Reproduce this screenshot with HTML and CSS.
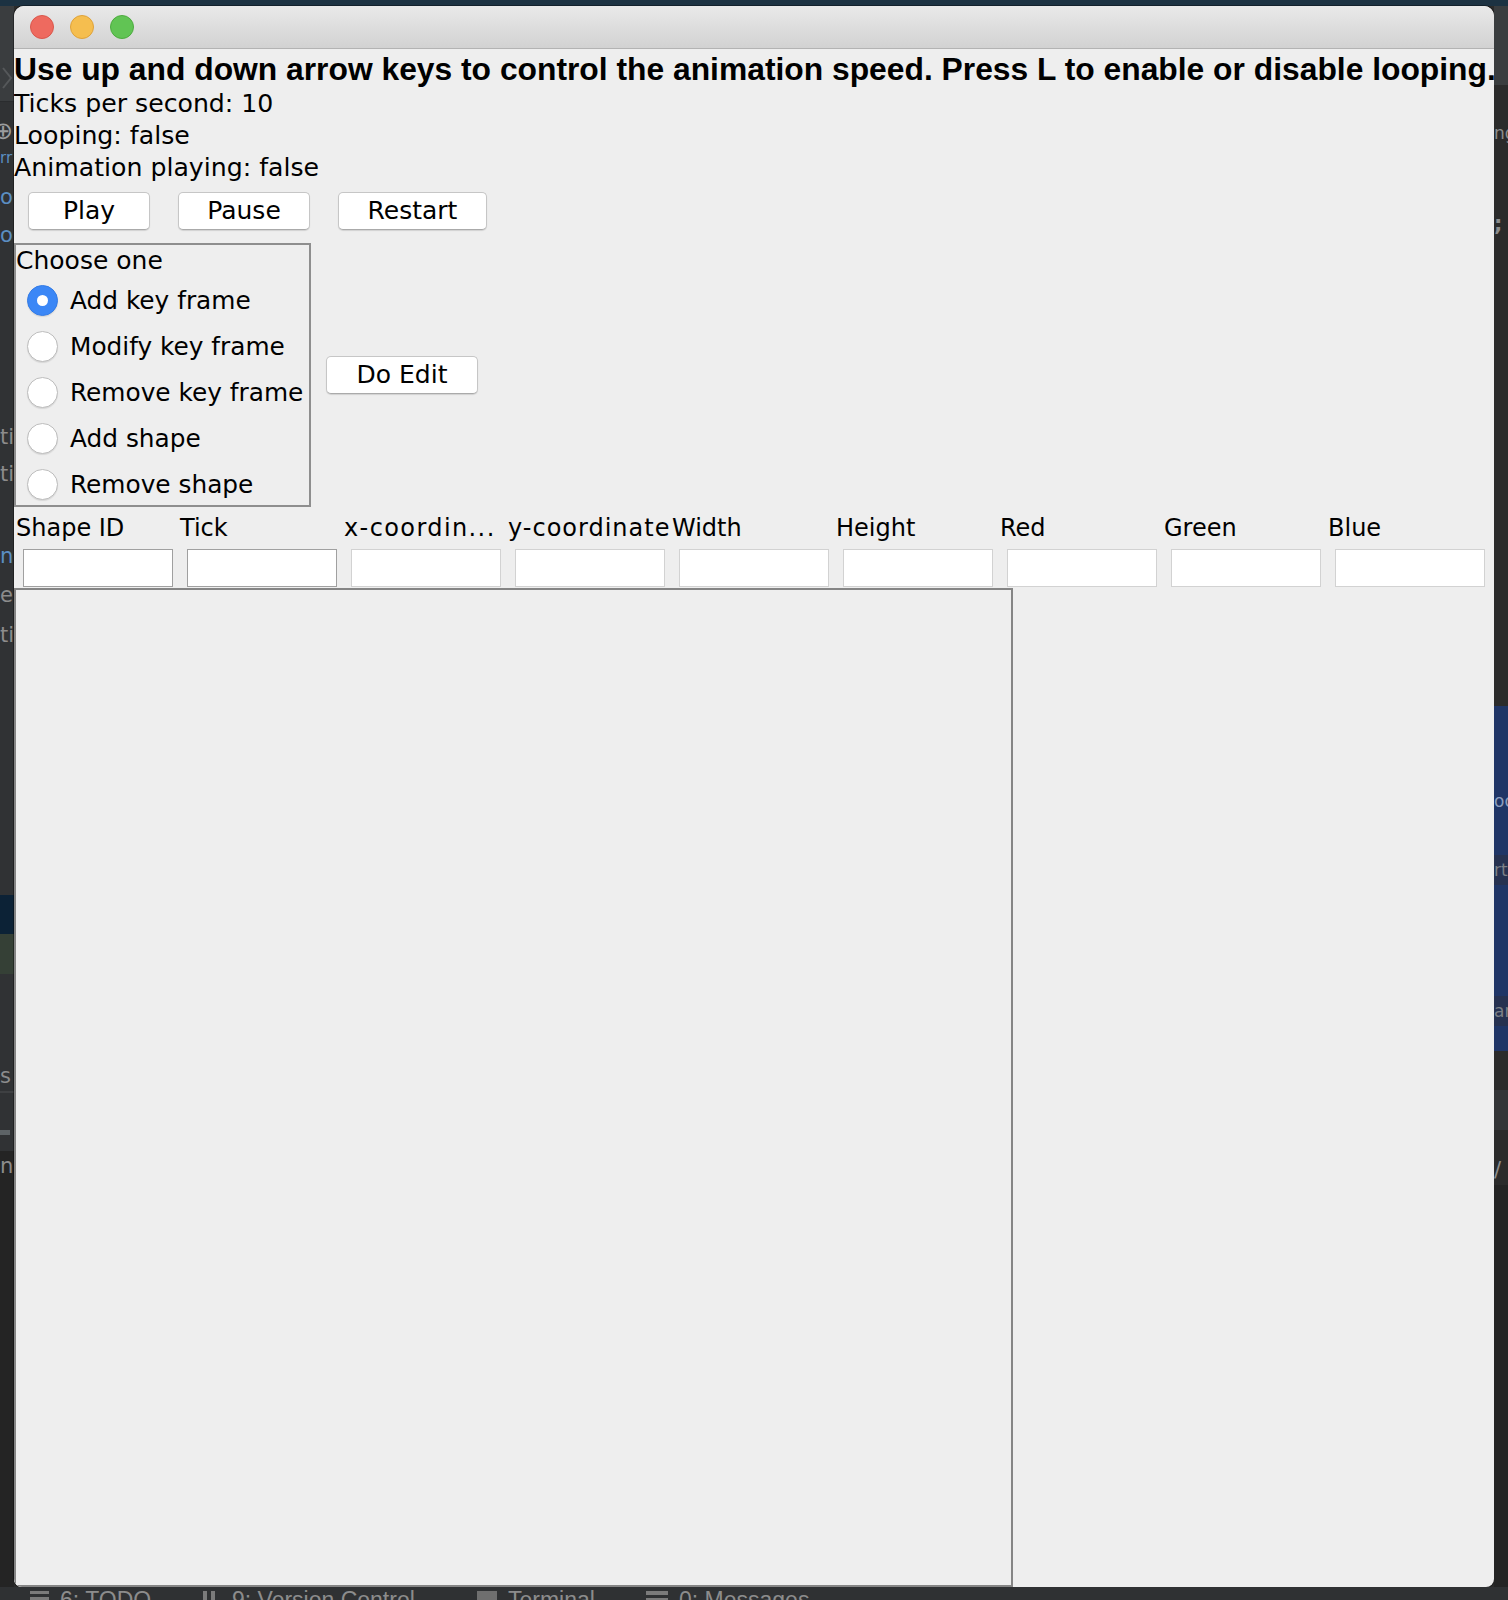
FILE: index.html
```html
<!DOCTYPE html>
<html lang="en">
<head>
<meta charset="utf-8">
<title>Animation Editor</title>
<link rel="stylesheet" href="styles.css">
</head>
<body>
<div class="desktop">
  <div class="ide-top"></div>
  <div class="ide-top"></div>
  <div class="ide-top"></div>

  <div class="ide-left">
    <div class="l-hdr">
      <svg class="chev" width="14" height="24" viewBox="0 0 14 24"><polyline points="3,2 11,12 3,22" fill="none" stroke="#55585a" stroke-width="2"/></svg>
    </div>
    <div class="gap g15"></div>
    <div class="frag plus h28">&#x2295;</div>
    <div class="gap g6"></div>
    <div class="frag blue small">rr</div>
    <div class="gap g7"></div>
    <div class="frag blue">o</div>
    <div class="gap g8"></div>
    <div class="frag blue">o</div>
    <div class="gap g172"></div>
    <div class="frag grey">tio</div>
    <div class="gap g7"></div>
    <div class="frag grey">tio</div>
    <div class="gap g52"></div>
    <div class="frag blue">n</div>
    <div class="gap g9"></div>
    <div class="frag grey">e</div>
    <div class="gap g10"></div>
    <div class="frag grey">ti</div>
    <div class="gap g245"></div>
    <div class="band navy"></div>
    <div class="band olive"></div>
    <div class="gap g87"></div>
    <div class="frag grey">s</div>
    <div class="sep"></div>
    <div class="gap g37"></div>
    <div class="bar"></div>
    <div class="gap g16"></div>
    <div class="frag grey darkbg">n:</div>
    <div class="rest"></div>
  </div>

  <div class="window">
    <div class="titlebar">
      <span class="light red"></span>
      <span class="light yellow"></span>
      <span class="light green"></span>
    </div>
    <div class="content">
      <div class="heading">Use up and down arrow keys to control the animation speed. Press L to enable or disable looping.</div>
      <div class="info">Ticks per second: 10</div>
      <div class="info">Looping: false</div>
      <div class="info">Animation playing: false</div>

      <div class="controls">
        <button class="btn btn-play">Play</button>
        <button class="btn btn-pause">Pause</button>
        <button class="btn btn-restart">Restart</button>
      </div>

      <div class="edit-row">
        <div class="choose">
          <div class="choose-title">Choose one</div>
          <label class="radio-row"><span class="radio checked"></span><span class="radio-label">Add key frame</span></label>
          <label class="radio-row"><span class="radio"></span><span class="radio-label">Modify key frame</span></label>
          <label class="radio-row"><span class="radio"></span><span class="radio-label">Remove key frame</span></label>
          <label class="radio-row"><span class="radio"></span><span class="radio-label">Add shape</span></label>
          <label class="radio-row"><span class="radio"></span><span class="radio-label">Remove shape</span></label>
        </div>
        <button class="btn btn-edit">Do Edit</button>
      </div>

      <div class="fields">
        <div class="cell"><div class="field-label">Shape ID</div><div class="field dark"></div></div>
        <div class="cell"><div class="field-label">Tick</div><div class="field dark"></div></div>
        <div class="cell"><div class="field-label wide-x">x-coordin...</div><div class="field"></div></div>
        <div class="cell"><div class="field-label wide-y">y-coordinate</div><div class="field"></div></div>
        <div class="cell"><div class="field-label">Width</div><div class="field"></div></div>
        <div class="cell"><div class="field-label">Height</div><div class="field"></div></div>
        <div class="cell"><div class="field-label">Red</div><div class="field"></div></div>
        <div class="cell"><div class="field-label">Green</div><div class="field"></div></div>
        <div class="cell"><div class="field-label">Blue</div><div class="field"></div></div>
      </div>

      <div class="canvas"></div>
    </div>
  </div>

  <div class="ide-right">
    <div class="r-hdr"><span class="dash"></span></div>
    <div class="gap g33"></div>
    <div class="frag grey rt">ng</div>
    <div class="gap g61"></div>
    <div class="frag grey semi">;</div>
    <div class="gap g467"></div>
    <div class="rband">
      <div class="gap g80"></div>
      <div class="frag light-t rt">oc</div>
      <div class="gap g39"></div>
      <div class="frag dim-t rt">rt</div>
      <div class="gap g111"></div>
      <div class="frag dim-t rt">ar</div>
    </div>
    <div class="gap g39"></div>
    <div class="rsep"></div>
    <div class="gap g25"></div>
    <div class="frag grey">/</div>
    <div class="rest"></div>
  </div>

  <div class="ide-status"></div>
  <div class="ide-status">
    <span class="st-item st-todo"><span class="st-icon list"></span>6: TODO</span>
    <span class="st-item st-vcs"><span class="st-icon vcs"></span>9: Version Control</span>
    <span class="st-item st-term"><span class="st-icon term"></span>Terminal</span>
    <span class="st-item st-msg"><span class="st-icon msg"></span>0: Messages</span>
  </div>
  <div class="ide-status"></div>
</div>
</body>
</html>
```

FILE: styles.css
```css
* { box-sizing: border-box; }

html, body {
  margin: 0;
  padding: 0;
  background: #2b2b2b;
}

.desktop {
  width: 1508px;
  height: 1600px;
  overflow: hidden;
  display: grid;
  grid-template-columns: 14px 1480px 14px;
  grid-template-rows: 6px 1581px 13px;
  background: #2b2b2b;
  font-family: "DejaVu Sans", sans-serif;
}

/* ---------- IDE behind the window ---------- */
.ide-top { background: #1c3242; }

.ide-left, .ide-right {
  display: flex;
  flex-direction: column;
  overflow: hidden;
}
.ide-left { background: #303234; }
.ide-right { background: #2b2b2b; }

.l-hdr {
  flex: none;
  height: 96px;
  background: #3a3d3f;
  border-bottom: 1px solid #2a2c2e;
  padding-top: 60px;
}
.chev { display: block; }

.r-hdr {
  flex: none;
  height: 79px;
  background: #3a3d3f;
  padding-top: 68px;
}
.dash {
  display: block;
  width: 7px;
  height: 3px;
  margin-left: 16px;
  background: #e0e0e0;
}

.frag {
  flex: none;
  width: 100%;
  height: 30px;
  font-family: "DejaVu Sans", sans-serif;
  font-size: 21px;
  line-height: 30px;
  white-space: nowrap;
  overflow: hidden;
}
.frag.rt { font-size: 17px; }
.frag.h28 { height: 28px; line-height: 28px; }
.frag.plus { color: #9a9c9e; font-size: 24px; text-indent: -7px; }
.frag.blue { color: #5b8ec2; }
.frag.small { height: 24px; font-size: 15px; line-height: 14px; }
.frag.grey { color: #8c8c8c; }
.frag.darkbg { background: #242424; }
.frag.semi { font-weight: bold; }
.frag.light-t { color: #8c9dbd; }
.frag.dim-t { color: #7b7f86; background: #263150; }

.gap { flex: none; width: 100%; }
.g6 { height: 6px; }
.g7 { height: 7px; }
.g8 { height: 8px; }
.g9 { height: 9px; }
.g10 { height: 10px; }
.g15 { height: 15px; }
.g16 { height: 16px; }
.g25 { height: 25px; }
.g33 { height: 33px; }
.g37 { height: 37px; }
.g39 { height: 39px; }
.g52 { height: 52px; }
.g61 { height: 61px; }
.g80 { height: 80px; }
.g87 { height: 87px; }
.g111 { height: 111px; }
.g172 { height: 172px; }
.g245 { height: 245px; }
.g467 { height: 467px; }

.band { flex: none; width: 100%; }
.band.navy { height: 39px; background: #0c2236; }
.band.olive { height: 40px; background: #354036; }
.sep { flex: none; width: 100%; height: 2px; background: #3e4042; }
.bar { flex: none; width: 10px; height: 5px; background: #5d6366; }
.rest { flex: 1; width: 100%; background: #242424; }

.rband {
  flex: none;
  width: 100%;
  height: 345px;
  background: #1f3566;
  display: flex;
  flex-direction: column;
}
.rsep { flex: none; width: 100%; height: 40px; background: #333537; }

.ide-status {
  background: #2f3133;
  overflow: hidden;
  display: flex;
  align-items: flex-start;
  padding-left: 16px;
  font-family: "Liberation Sans", sans-serif;
  font-size: 23px;
  line-height: 22px;
  color: #8c8c8c;
  white-space: nowrap;
}
.ide-status:first-child { padding-left: 0; }
.st-item {
  flex: none;
  display: flex;
  align-items: flex-start;
  gap: 11px;
  padding-top: 2px;
}
.st-todo { width: 173px; }
.st-vcs { width: 274px; }
.st-term { width: 169px; }
.st-icon { display: block; width: 20px; height: 14px; margin-top: 2px; background: #7b7b7b; }
.st-icon.list { width: 19px; background: repeating-linear-gradient(#7b7b7b 0 3px, transparent 3px 6px); }
.st-icon.vcs { width: 18px; background: linear-gradient(90deg, #7b7b7b 0 4px, transparent 4px 8px, #7b7b7b 8px 12px, transparent 12px); }
.st-icon.term { width: 20px; background: #6f6f6f; }
.st-icon.msg { width: 22px; background: linear-gradient(#7b7b7b 0 4px, transparent 4px 7px, #7b7b7b 7px 10px, transparent 10px); }

/* ---------- Window ---------- */
.window {
  grid-column: 2;
  grid-row: 2;
  display: flex;
  flex-direction: column;
  background: #eeeeee;
  border-radius: 10px 10px 8px 8px;
  overflow: hidden;
  box-shadow: 0 0 0 1px rgba(0,0,0,0.35);
}

.titlebar {
  flex: none;
  height: 43px;
  background: linear-gradient(#e9e9e9, #d2d2d2);
  border-bottom: 1px solid #b3b3b3;
  display: flex;
  align-items: center;
  gap: 16px;
  padding-left: 16px;
}
.light {
  width: 24px;
  height: 24px;
  border-radius: 50%;
  display: block;
}
.light.red { background: #ee6a5f; border: 1px solid #d9574c; }
.light.yellow { background: #f5be4f; border: 1px solid #dea23a; }
.light.green { background: #61c454; border: 1px solid #4dab3f; }

.content {
  flex: 1;
  display: flex;
  flex-direction: column;
  color: #000;
}

.heading {
  font-family: "Liberation Sans", Arial, sans-serif;
  font-weight: bold;
  font-size: 31.8px;
  line-height: 36px;
  padding-top: 2px;
  height: 39px;
  white-space: nowrap;
}

.info {
  font-size: 25.2px;
  line-height: 32px;
  height: 32px;
  white-space: nowrap;
}

.controls {
  display: flex;
  gap: 28px;
  padding-left: 14px;
  margin-top: 8px;
  height: 38px;
}

.btn {
  font-family: "DejaVu Sans", sans-serif;
  font-size: 25px;
  color: #000;
  background: #ffffff;
  border: 1px solid #c6c6c6;
  border-bottom-color: #aaaaaa;
  border-radius: 5px;
  box-shadow: 0 1px 1px rgba(0,0,0,0.12);
  height: 38px;
  line-height: 35px;
  padding: 0 0 1px;
  text-align: center;
  margin: 0;
}
.btn-play { width: 122px; }
.btn-pause { width: 132px; }
.btn-restart { width: 149px; }
.btn-edit { width: 152px; }

.edit-row {
  display: flex;
  align-items: center;
  gap: 15px;
  margin-top: 13px;
}

.choose {
  width: 297px;
  height: 264px;
  border: 2px solid #8e8e8e;
  display: flex;
  flex-direction: column;
}
.choose-title {
  flex: none;
  height: 32px;
  line-height: 32px;
  font-size: 25px;
  white-space: nowrap;
}
.radio-row {
  flex: none;
  height: 46px;
  display: flex;
  align-items: center;
  padding-left: 11px;
  gap: 12px;
}
.radio {
  flex: none;
  width: 31px;
  height: 31px;
  border-radius: 50%;
  background: #ffffff;
  border: 1px solid #bdbdbd;
  box-shadow: 0 1px 1px rgba(0,0,0,0.10);
  display: flex;
  align-items: center;
  justify-content: center;
}
.radio.checked {
  background: #3b87f6;
  border-color: #347ce6;
}
.radio.checked::after {
  content: "";
  width: 11px;
  height: 11px;
  border-radius: 50%;
  background: #ffffff;
}
.radio-label {
  font-size: 24.8px;
  white-space: nowrap;
}

.fields {
  display: grid;
  grid-template-columns: repeat(9, 164px);
}
.cell {
  display: flex;
  flex-direction: column;
  min-width: 0;
}
.field-label {
  font-size: 24px;
  line-height: 42px;
  height: 42px;
  padding-left: 2px;
  white-space: nowrap;
}
.field-label.wide-x { letter-spacing: 1.4px; }
.field-label.wide-y { letter-spacing: 1px; }
.field {
  margin-left: 9px;
  width: 150px;
  height: 38px;
  background: #ffffff;
  border: 1px solid #d2d2d2;
}
.field.dark { border-color: #a0a0a0; }

.canvas {
  margin-top: 1px;
  width: 999px;
  height: 999px;
  border: 2px solid #858585;
  background: #eeeeee;
}
```
